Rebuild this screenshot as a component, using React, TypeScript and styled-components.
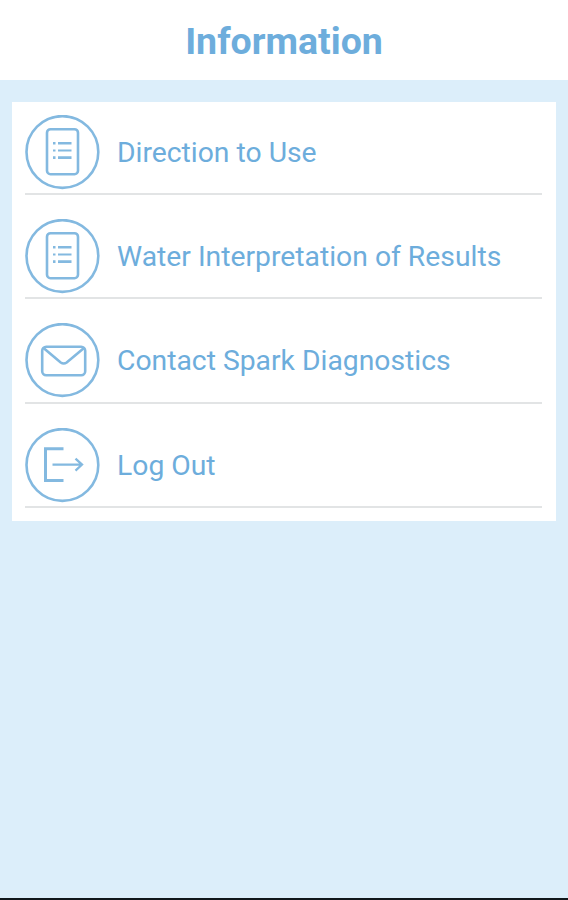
import React from "react";
import styled, { createGlobalStyle } from "styled-components";

const blue = "#6daddc";

const GlobalStyle = createGlobalStyle`
  *, *::before, *::after { box-sizing: border-box; }
  body { margin: 0; font-family: Roboto, "Liberation Sans", sans-serif; color: ${blue}; }
`;

const Screen = styled.div`
  display: flex;
  flex-direction: column;
  height: 900px;
  background: #dceefa;
  border-bottom: 2px solid #10171b;
  overflow: hidden;
`;

const Header = styled.header`
  display: flex;
  align-items: center;
  justify-content: center;
  height: 80px;
  padding-top: 1px;
  background: #fff;
`;

const Title = styled.h1`
  margin: 0;
  font-size: 37.5px;
  line-height: 44px;
  font-weight: 700;
`;

const Menu = styled.ul`
  display: flex;
  flex-direction: column;
  gap: 24px;
  height: 418.5px;
  margin: 22px 12.5px 0 12px;
  padding: 12.6px 13.5px 0 13px;
  background: #fff;
  list-style: none;
`;

const MenuItem = styled.li`
  display: flex;
  align-items: flex-start;
  height: 80.4px;
  border-bottom: 2px solid #e2e4e5;
`;

const Icon = styled.svg`
  flex: none;
  width: 75px;
  height: 75px;
  fill: none;
  stroke: #83b9e0;
  stroke-width: 2.6;
`;

const Label = styled.span`
  margin-left: 17px;
  font-size: 28.3px;
  line-height: 76.8px;
  font-weight: 400;
  white-space: nowrap;
`;

const DocumentIcon = () => (
  <Icon viewBox="0 0 75 75">
    <circle cx="37.4" cy="37" r="35.9" />
    <rect x="22" y="14.2" width="31" height="45" rx="3.5" />
    <path d="M28 28.3h2.5M33 28.3h13.5M28 42.6h2.5M33 42.6h13.5" />
    <path d="M28 35.4h2.5M33 35.4h13.5" strokeWidth="2" />
  </Icon>
);

const MailIcon = () => (
  <Icon viewBox="0 0 75 75">
    <circle cx="37.4" cy="37" r="35.9" />
    <rect x="17.2" y="23.7" width="43" height="28.5" rx="4" />
    <path d="M18.5 25 35.7 39.5q3 2 6 0L59 25" />
  </Icon>
);

const LogoutIcon = () => (
  <Icon viewBox="0 0 75 75">
    <circle cx="37.4" cy="37" r="35.9" />
    <path d="M38.5 20.8H20.5V52.5H38.5" strokeWidth="3" />
    <path d="M27.5 36.6H56M50.5 30.6l6.5 6-6.5 6" strokeWidth="2.3" />
  </Icon>
);

const items = [
  { label: "Direction to Use", Glyph: DocumentIcon },
  { label: "Water Interpretation of Results", Glyph: DocumentIcon },
  { label: "Contact Spark Diagnostics", Glyph: MailIcon },
  { label: "Log Out", Glyph: LogoutIcon },
];

export default function App() {
  return (
    <>
      <GlobalStyle />
      <Screen>
        <Header>
          <Title>Information</Title>
        </Header>
        <Menu>
          {items.map(({ label, Glyph }) => (
            <MenuItem key={label}>
              <Glyph />
              <Label>{label}</Label>
            </MenuItem>
          ))}
        </Menu>
      </Screen>
    </>
  );
}
